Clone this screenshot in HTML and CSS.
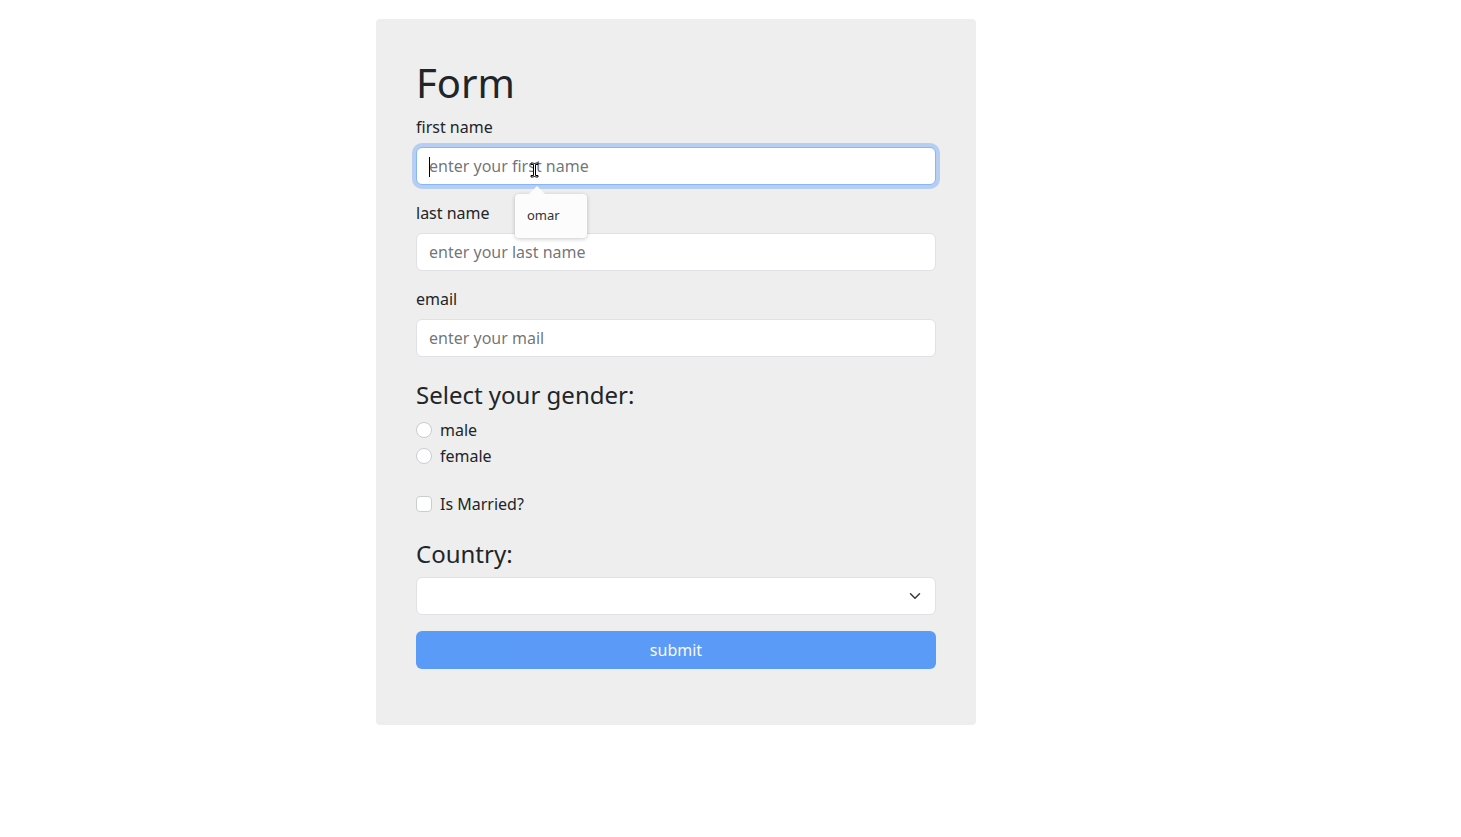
FILE: index.html
```html
<!DOCTYPE html>
<html lang="en">
<head>
<meta charset="utf-8">
<title>Form</title>
<link rel="stylesheet" href="styles.css">
</head>
<body>
<form class="card">
  <h1 class="title">Form</h1>
  <div class="field">
    <label class="label" for="fn">first name</label>
    <div class="input-wrap">
      <div class="input focus"><span class="caret"></span><span class="ph">enter your first name</span></div>
      <svg class="ibeam" width="9" height="16" viewBox="0 0 9 16"><path d="M1 1h2.5l1 1 1-1H8v1.5H5.5v11H8V15H5.5l-1-1-1 1H1v-1.5h2.5v-11H1z" fill="#fff" stroke="#000" stroke-width="1"/></svg>
      <div class="suggest"><span class="suggest-arrow"></span>omar</div>
    </div>
  </div>
  <div class="field">
    <label class="label" for="ln">last name</label>
    <div class="input"><span class="ph">enter your last name</span></div>
  </div>
  <div class="field">
    <label class="label" for="em">email</label>
    <div class="input"><span class="ph">enter your mail</span></div>
  </div>
  <h4 class="subtitle gender">Select your gender:</h4>
  <div class="check"><span class="radio"></span><span>male</span></div>
  <div class="check"><span class="radio"></span><span>female</span></div>
  <div class="check married"><span class="box"></span><span>Is Married?</span></div>
  <h4 class="subtitle country">Country:</h4>
  <div class="select">
    <svg width="16" height="12" viewBox="0 0 16 16"><path d="m2 5 6 6 6-6" fill="none" stroke="#343a40" stroke-width="2" stroke-linecap="round" stroke-linejoin="round"/></svg>
  </div>
  <div class="btn">submit</div>
</form>
</body>
</html>
```
FILE: styles.css
```css
* { box-sizing: border-box; }
html, body { margin: 0; background: #fff; }
body {
  font-family: "Noto Sans", "Open Sans", sans-serif;
  font-size: 16px;
  line-height: 1.5;
  color: #212529;
  padding: 19px 0 0 376px;
  height: 837px;
}
.card {
  width: 600px;
  background: #eeeeee;
  border-radius: 4px;
  padding: 40px 40px 56px;
}
.title {
  margin: 0 0 8px;
  font-size: 40px;
  font-weight: 400;
  line-height: 1.2;
}
.field { margin-bottom: 16px; }
.label { display: block; margin-bottom: 8px; }
.input-wrap { position: relative; z-index: 5; }
.input {
  height: 38px;
  background: #fff;
  border: 1px solid #dee2e6;
  border-radius: 6px;
  padding: 6px 12px;
  display: flex;
  align-items: center;
  position: relative;
}
.input.focus {
  border-color: #86b7fe;
  box-shadow: 0 0 0 4px rgba(13,110,253,.25);
}
.ph { color: rgba(33,37,41,.65); }
.caret {
  position: absolute;
  left: 12px;
  top: 9px;
  width: 1px;
  height: 20px;
  background: #000;
}
.ibeam { position: absolute; left: 114px; top: 15px; }
.suggest {
  position: absolute;
  left: 99px;
  top: 47px;
  width: 72px;
  height: 44px;
  background: #fcfcfc;
  border-radius: 4px;
  box-shadow: 0 1px 4px rgba(0,0,0,.22);
  font-size: 13px;
  color: #333;
  padding: 11px 12px;
  line-height: 20px;
}
.suggest-arrow {
  position: absolute;
  left: 14px;
  top: -8px;
  width: 0; height: 0;
  border-left: 8px solid transparent;
  border-right: 8px solid transparent;
  border-bottom: 8px solid #fcfcfc;
}
.subtitle {
  margin: 0 0 8px;
  font-size: 24px;
  font-weight: 400;
  line-height: 1.2;
}
.gender { margin-top: 24px; }
.check {
  display: flex;
  align-items: center;
  gap: 8px;
  min-height: 24px;
  margin-bottom: 2px;
}
.radio, .box {
  width: 16px; height: 16px;
  background: #fff;
  border: 1px solid #c9ccd0;
}
.radio { border-radius: 50%; }
.box { border-radius: 4px; }
.married { margin-top: 24px; margin-bottom: 24px; }
.select {
  height: 38px;
  background: #fff;
  border: 1px solid #dee2e6;
  border-radius: 6px;
  display: flex;
  align-items: center;
  justify-content: flex-end;
  padding-right: 12px;
  margin-bottom: 16px;
}
.btn {
  height: 38px;
  background: #0d6efd;
  opacity: .65;
  color: #fff;
  border-radius: 6px;
  display: flex;
  align-items: center;
  justify-content: center;
}
```
